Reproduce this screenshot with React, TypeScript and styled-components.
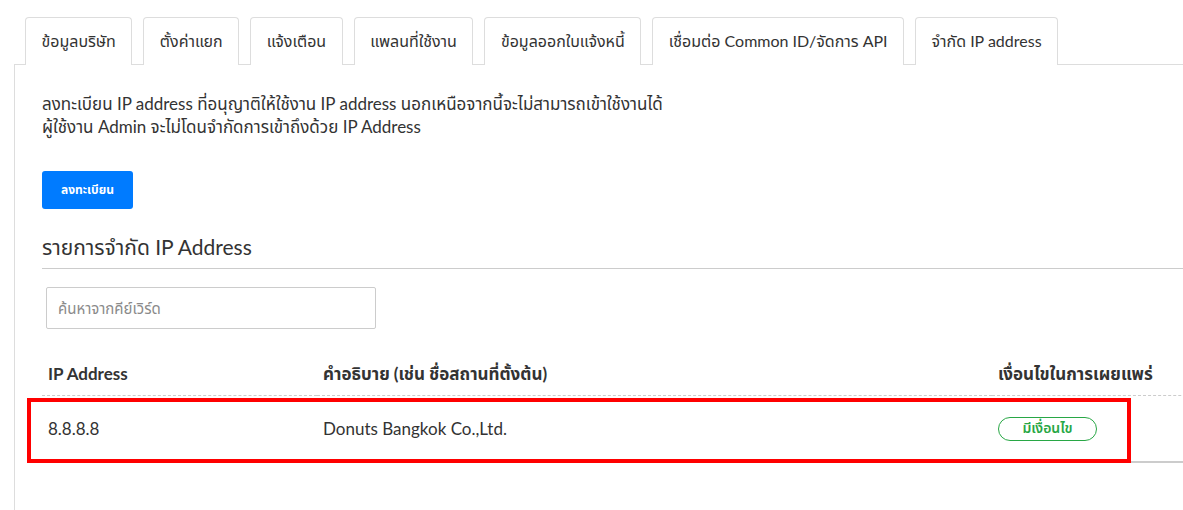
import styled, { createGlobalStyle } from 'styled-components';

const GlobalStyle = createGlobalStyle`
  html, body {
    margin: 0;
    padding: 0;
    background: #fff;
  }
  body {
    font-family: Lato, 'Noto Sans Thai', 'Noto Sans', sans-serif;
    color: #333;
    overflow: hidden;
  }
`;

const TABS = [
  'ข้อมูลบริษัท',
  'ตั้งค่าแยก',
  'แจ้งเตือน',
  'แพลนที่ใช้งาน',
  'ข้อมูลออกใบแจ้งหนี้',
  'เชื่อมต่อ Common ID/จัดการ API',
  'จำกัด IP address',
];

const ROWS = [{ ip: '8.8.8.8', desc: 'Donuts Bangkok Co.,Ltd.', cond: 'มีเงื่อนไข' }];

const App = () => {
  return (
    <Page>
      <GlobalStyle />
      <TabBar>
        {TABS.map((tab, i) => (
          <Tab key={tab} active={i === TABS.length - 1}>
            {tab}
          </Tab>
        ))}
      </TabBar>
      <Panel>
        <Notice>
          ลงทะเบียน IP address ที่อนุญาติให้ใช้งาน IP address นอกเหนือจากนี้จะไม่สามารถเข้าใช้งานได้
          <br />
          ผู้ใช้งาน Admin จะไม่โดนจำกัดการเข้าถึงด้วย IP Address
        </Notice>
        <PrimaryButton>ลงทะเบียน</PrimaryButton>
        <SectionTitle>รายการจำกัด IP Address</SectionTitle>
        <Search placeholder="ค้นหาจากคีย์เวิร์ด" />
        <TableWrap>
          <Table>
            <colgroup>
              <col style={{ width: 275 }} />
              <col style={{ width: 675 }} />
              <col />
            </colgroup>
            <thead>
              <tr>
                <Th>IP Address</Th>
                <Th>คำอธิบาย (เช่น ชื่อสถานที่ตั้งต้น)</Th>
                <Th>เงื่อนไขในการเผยแพร่</Th>
              </tr>
            </thead>
            <tbody>
              {ROWS.map((row) => (
                <tr key={row.ip}>
                  <Td>{row.ip}</Td>
                  <Td>{row.desc}</Td>
                  <Td>
                    <Badge>{row.cond}</Badge>
                  </Td>
                </tr>
              ))}
            </tbody>
          </Table>
          <Highlight />
        </TableWrap>
      </Panel>
    </Page>
  );
};

export default App;

const Page = styled.div`
  width: 1183px;
  height: 510px;
  padding-top: 17px;
  box-sizing: border-box;
  overflow: hidden;
`;

const TabBar = styled.div`
  display: flex;
  gap: 11px;
  padding-left: 25px;
`;

const Tab = styled.div<{ active?: boolean }>`
  height: 48px;
  box-sizing: border-box;
  padding: 0 15.5px;
  display: flex;
  align-items: center;
  font-size: 16px;
  color: #333;
  border: 1px solid #ddd;
  border-bottom: none;
  border-radius: 4px 4px 0 0;
  background: #fff;
  margin-bottom: -1px;
  position: relative;
  z-index: ${(p) => (p.active ? 2 : 0)};
  white-space: nowrap;
`;

const Panel = styled.div`
  margin-left: 14px;
  border-left: 1px solid #ddd;
  border-top: 1px solid #ddd;
  padding: 27px 0 0 27px;
  height: 460px;
  box-sizing: border-box;
`;

const Notice = styled.p`
  margin: 0;
  font-size: 17px;
  line-height: 23px;
  color: #333;
`;

const PrimaryButton = styled.button`
  margin-top: 33px;
  width: 91px;
  height: 38px;
  background: #007bff;
  border: none;
  border-radius: 3px;
  color: #fff;
  font-family: inherit;
  font-size: 12px;
  font-weight: 700;
  cursor: pointer;
`;

const SectionTitle = styled.h3`
  margin: 24px 0 0;
  padding-bottom: 7px;
  font-size: 21px;
  line-height: 28px;
  font-weight: 400;
  color: #333;
  border-bottom: 1px solid #ccc;
`;

const Search = styled.input`
  display: block;
  margin: 18px 0 0 4px;
  width: 330px;
  height: 42px;
  box-sizing: border-box;
  padding: 0 11px;
  border: 1px solid #ccc;
  border-radius: 2px;
  font-family: inherit;
  font-size: 15px;
  color: #333;
  &::placeholder {
    color: #8a8a8a;
  }
`;

const TableWrap = styled.div`
  position: relative;
  margin-top: 22px;
  width: 1250px;
`;

const Table = styled.table`
  width: 100%;
  border-collapse: collapse;
  table-layout: fixed;
`;

const Th = styled.th`
  text-align: left;
  font-size: 17px;
  font-weight: 700;
  color: #333;
  height: 42px;
  padding: 2px 6px 0;
  line-height: 20px;
  border-bottom: 1px dashed #ccc;
  white-space: nowrap;
  vertical-align: middle;
`;

const Td = styled.td`
  font-size: 17px;
  color: #333;
  height: 65px;
  padding: 0 6px;
  border-bottom: 2px solid #ccc;
  vertical-align: middle;
`;

const Badge = styled.span`
  display: inline-flex;
  align-items: center;
  justify-content: center;
  width: 99px;
  height: 24px;
  box-sizing: border-box;
  border: 1px solid #28a745;
  border-radius: 12px;
  color: #28a745;
  font-size: 14px;
  font-weight: 600;
`;

const Highlight = styled.div`
  position: absolute;
  left: -15px;
  top: 47px;
  width: 1104px;
  height: 65px;
  box-sizing: border-box;
  border: 4px solid #ff0000;
  pointer-events: none;
`;
